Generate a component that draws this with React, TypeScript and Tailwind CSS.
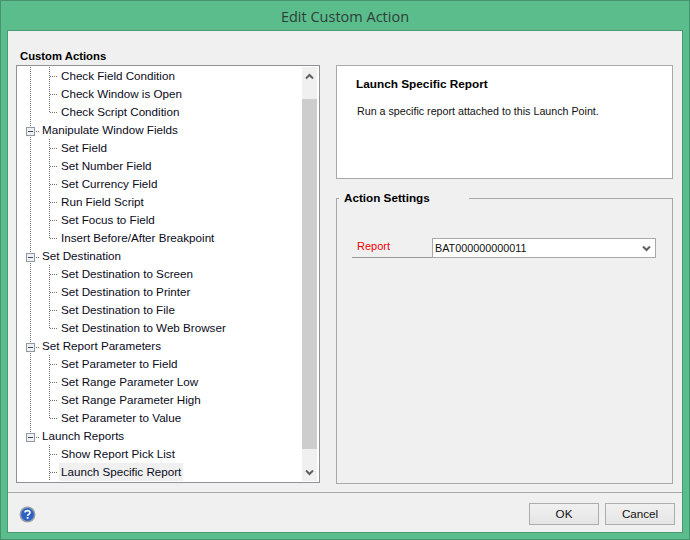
import React from "react";

type Row = { label: string; level: 0 | 1; last?: boolean; selected?: boolean; noTrunk?: boolean };

const rows: Row[] = [
  { label: "Check Field Condition", level: 1 },
  { label: "Check Window is Open", level: 1 },
  { label: "Check Script Condition", level: 1, last: true },
  { label: "Manipulate Window Fields", level: 0 },
  { label: "Set Field", level: 1 },
  { label: "Set Number Field", level: 1 },
  { label: "Set Currency Field", level: 1 },
  { label: "Run Field Script", level: 1 },
  { label: "Set Focus to Field", level: 1 },
  { label: "Insert Before/After Breakpoint", level: 1, last: true },
  { label: "Set Destination", level: 0 },
  { label: "Set Destination to Screen", level: 1 },
  { label: "Set Destination to Printer", level: 1 },
  { label: "Set Destination to File", level: 1 },
  { label: "Set Destination to Web Browser", level: 1, last: true },
  { label: "Set Report Parameters", level: 0 },
  { label: "Set Parameter to Field", level: 1 },
  { label: "Set Range Parameter Low", level: 1 },
  { label: "Set Range Parameter High", level: 1 },
  { label: "Set Parameter to Value", level: 1, last: true },
  { label: "Launch Reports", level: 0, noTrunk: true },
  { label: "Show Report Pick List", level: 1, noTrunk: true },
  { label: "Launch Specific Report", level: 1, noTrunk: true, selected: true },
];

const dots = "1 1";

function Guides({ row }: { row: Row }) {
  if (row.level === 0) {
    return (
      <svg width="23" height="18" className="shrink-0" shapeRendering="crispEdges">
        <line x1="13.5" y1="0" x2="13.5" y2={row.noTrunk ? 5 : 18} stroke="#707070" strokeDasharray={dots} />
        <rect x="9.5" y="6.5" width="8" height="8" fill="#eef0f2" stroke="#8f9aa5" />
        <line x1="11" y1="10.5" x2="16" y2="10.5" stroke="#3a4a6a" />
        <line x1="19" y1="10.5" x2="23" y2="10.5" stroke="#707070" strokeDasharray={dots} />
      </svg>
    );
  }
  return (
    <svg width="42" height="18" className="shrink-0" shapeRendering="crispEdges">
      {!row.noTrunk && <line x1="13.5" y1="0" x2="13.5" y2="18" stroke="#707070" strokeDasharray={dots} />}
      <line x1="32.5" y1="0" x2="32.5" y2={row.last ? 10 : 18} stroke="#707070" strokeDasharray={dots} />
      <line x1="33" y1="9.5" x2="41" y2="9.5" stroke="#707070" strokeDasharray={dots} />
    </svg>
  );
}

function Chevron({ up }: { up?: boolean }) {
  return (
    <svg width="9" height="7" viewBox="0 0 9 7">
      <path d={up ? "M1 5.5 L4.5 2 L8 5.5" : "M1 1.5 L4.5 5 L8 1.5"} fill="none" stroke="#606060" strokeWidth="2" />
    </svg>
  );
}

export default function App() {
  return (
    <div
      className="w-[690px] h-[540px] flex flex-col bg-[#5bbc8c] border border-[#45946e] text-[11.65px] text-black overflow-hidden"
      style={{ fontFamily: '"Liberation Sans", Arial, sans-serif' }}
    >
      <div className="h-[29px] shrink-0 flex items-center justify-center text-[14.5px] text-[#2f3f38] pt-[2px]" style={{ fontFamily: '"Open Sans", sans-serif' }}>
        Edit Custom Action
      </div>

      <div className="mx-[6px] mb-[6px] flex-1 flex flex-col bg-[#f0f0f0] border border-[#479a72] min-h-0">
        <div className="h-[461px] shrink-0 flex pl-[8px] pt-[18px] gap-[16px]">
          <div className="w-[304px] flex flex-col">
            <div className="h-[16px] pl-[4px] font-bold text-[11.3px] leading-[15px]">Custom Actions</div>
            <div className="h-[418px] border border-[#8e9297] bg-white flex">
              <div className="w-[285px] pt-[1px] overflow-hidden">
                {rows.map((r) => (
                  <div key={r.label} className="h-[18px] flex items-center">
                    <Guides row={r} />
                    <span className={`px-[2px] h-[18px] leading-[17px] whitespace-nowrap text-[#0a0a1a] ${r.selected ? "bg-[#f0f0f0]" : ""}`}>
                      {r.label}
                    </span>
                  </div>
                ))}
              </div>
              <div className="w-[15px] my-[1px] bg-[#f0f0f0] flex flex-col">
                <div className="h-[32px] flex items-start pt-[6px] justify-center shrink-0"><Chevron up /></div>
                <div className="h-[350px] bg-[#cdcdcd] shrink-0" />
                <div className="flex-1 flex items-end pb-[5px] justify-center"><Chevron /></div>
              </div>
            </div>
          </div>

          <div className="w-[337px] flex flex-col pt-[16px]">
            <div className="h-[114px] bg-white border border-[#a9a9a9] px-[19px] pt-[11px]">
              <div className="font-bold text-[11.8px] leading-[14px]">Launch Specific Report</div>
              <div className="mt-[13px] pl-[1px] text-[10.7px] leading-[14px] text-[#111]">Run a specific report attached to this Launch Point.</div>
            </div>
            <div className="relative mt-[19px] h-[286px] border border-[#a9a9a9] px-[15px] pt-[39px]">
              <div className="absolute -top-[9px] left-[2px] px-[5px] pr-[39px] bg-[#f0f0f0] font-bold text-[11.7px] leading-[16px]">Action Settings</div>
              <div className="flex h-[20px]">
                <div className="w-[80px] border-b border-[#9a9a9a] pl-[5px] text-[11px] text-[#f00000] leading-[17px]">Report</div>
                <div className="flex-1 mr-[1px] bg-white border border-[#a9a9a9] flex items-center justify-between pl-[2px] pr-[4px] text-[10.8px] text-[#111]">
                  <span>BAT000000000011</span>
                  <Chevron />
                </div>
              </div>
            </div>
          </div>
        </div>

        <div className="flex-1 border-t border-[#a9a9a9] flex items-center justify-between pl-[11px] pr-[7px] pt-[3px]">
          <svg width="17" height="17" viewBox="0 0 17 17">
            <circle cx="8.5" cy="8.5" r="8" fill="#9aa0a8" />
            <circle cx="8.5" cy="8.5" r="6.5" fill="#2b62c4" />
            <path d="M6 6.6 C6 4 11 4 11 6.6 C11 8.3 8.6 8.2 8.6 10" fill="none" stroke="#fff" strokeWidth="1.6" />
            <rect x="7.7" y="11" width="1.8" height="1.8" fill="#fff" />
          </svg>
          <div className="flex gap-[6px]">
            <button className="w-[70px] h-[22px] border border-[#adadad] bg-gradient-to-b from-[#f0f0f0] to-[#e5e5e5] text-[#111]">OK</button>
            <button className="w-[70px] h-[22px] border border-[#adadad] bg-gradient-to-b from-[#f0f0f0] to-[#e5e5e5] text-[#111]">Cancel</button>
          </div>
        </div>
      </div>
    </div>
  );
}
